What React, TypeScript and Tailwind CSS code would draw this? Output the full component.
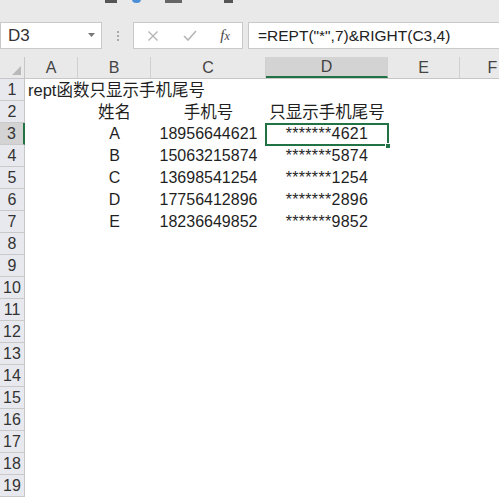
import type { ReactNode } from 'react';

const font = { fontFamily: '"Liberation Sans", "Noto Sans CJK SC", sans-serif' };

const cols = [
  { key: 'A', w: 'w-[53px]' },
  { key: 'B', w: 'w-[73px]' },
  { key: 'C', w: 'w-[115px]' },
  { key: 'D', w: 'w-[122px]' },
  { key: 'E', w: 'w-[72px]' },
  { key: 'F', w: 'w-[66px] shrink-0' },
];

const people = [
  ['A', '18956644621', '*******4621'],
  ['B', '15063215874', '*******5874'],
  ['C', '13698541254', '*******1254'],
  ['D', '17756412896', '*******2896'],
  ['E', '18236649852', '*******9852'],
];

function Cell({ w, children, align = 'center', selected = false }: { w: string; children?: ReactNode; align?: 'center' | 'left'; selected?: boolean }) {
  return (
    <div
      className={`${w} shrink-0 relative h-full flex items-center whitespace-nowrap text-[16px] text-[#1f1f1f] ${
        align === 'center' ? 'justify-center' : 'justify-start pl-[3px]'
      }`}
    >
      {selected && (
        <>
          <div className="absolute inset-x-[-1px] top-0 bottom-[-1px] border-2 border-[#217346]" />
          <div className="absolute right-[-3px] bottom-[-4px] w-[6px] h-[6px] bg-[#217346] border border-white" />
        </>
      )}
      {children}
    </div>
  );
}

export default function App() {
  const rows = Array.from({ length: 19 }, (_, i) => i + 1);

  const content = (r: number): ReactNode[] => {
    if (r === 1)
      return [
        <Cell key="a" w="w-[53px]" align="left">
          <span className="relative z-10 text-[16.5px]">rept函数只显示手机尾号</span>
        </Cell>,
      ];
    if (r === 2)
      return [
        <Cell key="a" w="w-[53px]" />,
        <Cell key="b" w="w-[73px]"><span className="text-[16.5px]">姓名</span></Cell>,
        <Cell key="c" w="w-[115px]"><span className="text-[16.5px]">手机号</span></Cell>,
        <Cell key="d" w="w-[122px]"><span className="text-[16.5px]">只显示手机尾号</span></Cell>,
      ];
    const p = people[r - 3];
    if (!p) return [];
    return [
      <Cell key="a" w="w-[53px]" />,
      <Cell key="b" w="w-[73px]">{p[0]}</Cell>,
      <Cell key="c" w="w-[115px]">{p[1]}</Cell>,
      <Cell key="d" w="w-[122px]" selected={r === 3}>
        <span className="tracking-[0.3px]">{p[2]}</span>
      </Cell>,
    ];
  };

  return (
    <div className="w-[499px] h-[500px] overflow-hidden bg-white flex flex-col" style={font}>
      {/* ribbon remnant */}
      <div className="h-[16px] shrink-0 bg-[#e9e9e9] relative overflow-hidden">
        <div className="absolute left-[105px] top-0 w-[12px] h-[3px] bg-[#555]" />
        <div className="absolute left-[132px] top-[-5px] w-[9px] h-[8px] rounded-full bg-[#4a8fd8]" />
        <div className="absolute left-[165px] top-0 w-[17px] h-[3px] bg-[#666]" />
        <div className="absolute left-[224px] top-0 w-[9px] h-[3px] bg-[#555]" />
      </div>

      {/* formula bar */}
      <div className="h-[41px] shrink-0 bg-[#e9e9e9] flex items-start pt-[6px]">
        <div className="w-[102px] h-[27px] bg-white border border-[#c9c9c9] flex items-center justify-between pl-[7px] pr-[6px]">
          <span className="text-[17px] text-[#333]">D3</span>
          <svg width="7" height="5" viewBox="0 0 7 5"><path d="M0 0h7L3.5 4z" fill="#777" /></svg>
        </div>
        <div className="w-[31px] h-[27px] flex flex-col items-center justify-center gap-[2px]">
          <span className="w-[2px] h-[2px] bg-[#aaa]" />
          <span className="w-[2px] h-[2px] bg-[#aaa]" />
          <span className="w-[2px] h-[2px] bg-[#aaa]" />
        </div>
        <div className="w-[110px] h-[27px] bg-white border border-[#c9c9c9] flex items-center">
          <div className="w-[38px] flex justify-center">
            <svg width="12" height="12" viewBox="0 0 12 12"><path d="M1.5 1.5l9 9M10.5 1.5l-9 9" stroke="#b5b5b5" strokeWidth="1.4" /></svg>
          </div>
          <div className="w-[36px] flex justify-center">
            <svg width="14" height="11" viewBox="0 0 14 11"><path d="M1 6l4 4 8-9" stroke="#b5b5b5" strokeWidth="1.6" fill="none" /></svg>
          </div>
          <div className="flex-1 flex justify-center">
            <span className="italic text-[15px] text-[#444]" style={{ fontFamily: '"Liberation Serif", serif' }}>
              f<span className="text-[12px]">x</span>
            </span>
          </div>
        </div>
        <div className="w-[5px]" />
        <div className="flex-1 h-[27px] bg-white border border-[#c9c9c9] border-r-0 flex items-center pl-[9px]">
          <span className="text-[15.5px] text-[#222] whitespace-nowrap">=REPT("*",7)&amp;RIGHT(C3,4)</span>
        </div>
      </div>

      {/* column headers */}
      <div className="h-[22px] shrink-0 flex bg-[#e9e9e9] border-b border-[#c6c6c6]">
        <div className="w-[25px] shrink-0 h-full border-r border-[#c6c6c6] relative">
          <svg className="absolute right-[3px] bottom-[3px]" width="9" height="9" viewBox="0 0 9 9"><path d="M9 0v9H0z" fill="#b9b9b9" /></svg>
        </div>
        {cols.map((c) => (
          <div
            key={c.key}
            className={`${c.w} shrink-0 h-full flex items-center justify-center text-[16px] text-[#444] border-r border-[#d0d0d0] ${
              c.key === 'D' ? 'bg-[#d3d3d3] border-b-2 border-b-[#217346] text-[#333]' : ''
            }`}
          >
            {c.key}
          </div>
        ))}
      </div>

      {/* grid */}
      <div className="flex-1 flex flex-col">
        {rows.map((r) => (
          <div key={r} className="h-[22px] flex shrink-0">
            <div
              className={`w-[25px] shrink-0 h-full flex items-center justify-center text-[16px] text-[#333] border-b border-[#c9c9c9] ${
                r === 3 ? 'bg-[#d3d3d3] border-r-2 border-r-[#217346]' : 'bg-[#e8e9ee] border-r border-r-[#c6c6c6]'
              }`}
            >
              {r}
            </div>
            <div className="flex-1 flex h-full">{content(r)}</div>
          </div>
        ))}
      </div>
    </div>
  );
}
